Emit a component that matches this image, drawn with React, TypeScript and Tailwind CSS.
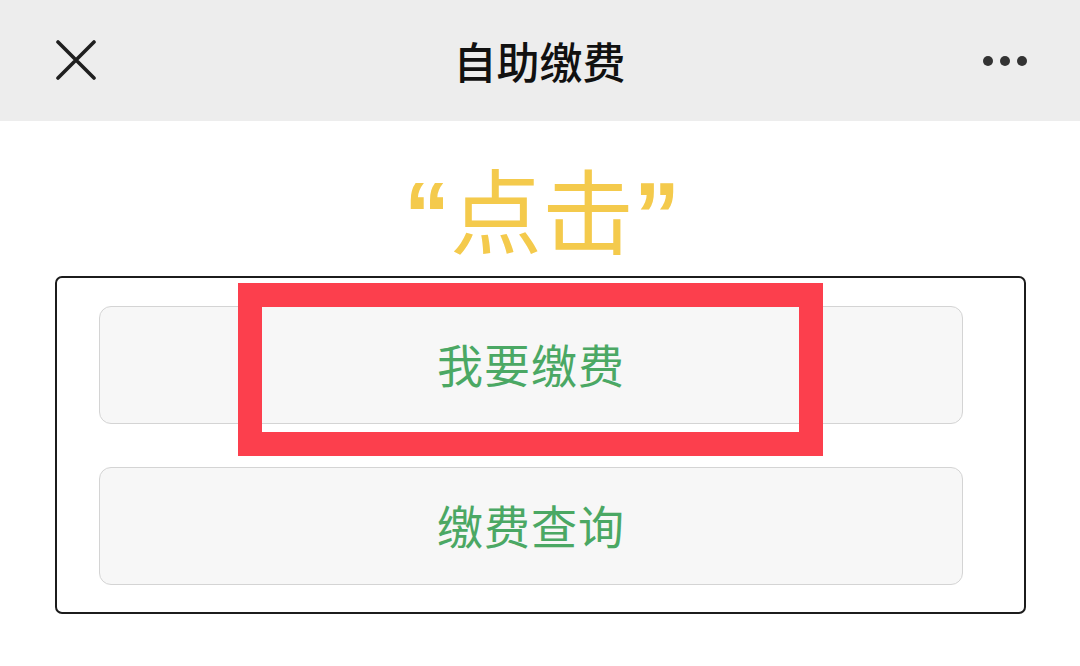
const cjk = "font-['Noto_Sans_CJK_SC',sans-serif]";

const PayButton = ({ label }: { label: string }) => (
  <div className="w-[864px] h-[118px] rounded-[12px] border border-[#d4d4d4] bg-[#f7f7f7] flex items-center justify-center">
    <span className="text-[46px] leading-none text-[#4ba864] tracking-[1px] mt-[-5px]">{label}</span>
  </div>
);

const App = () => {
  return (
    <div className={`w-[1080px] h-[666px] bg-white overflow-hidden ${cjk}`}>
      {/* Nav bar */}
      <div className="h-[121px] bg-[#ededed] flex items-center justify-between px-[56px]">
        <svg width="40" height="40" viewBox="0 0 40 40" className="mt-[-2px]">
          <path d="M2 2 L38 38 M38 2 L2 38" stroke="#1f1f1f" strokeWidth="3.6" strokeLinecap="round" />
        </svg>
        <h1 className="text-[43px] font-medium text-[#111] leading-none">自助缴费</h1>
        <div className="flex gap-[7px] mr-[-3px]">
          <span className="w-[10px] h-[10px] rounded-full bg-[#333]" />
          <span className="w-[10px] h-[10px] rounded-full bg-[#333]" />
          <span className="w-[10px] h-[10px] rounded-full bg-[#333]" />
        </div>
      </div>

      {/* Hint */}
      <div className="h-[155px] flex items-center justify-center pt-[24px]">
        <span className="text-[92px] leading-none text-[#f4ca4c] ml-[4px]">
          <span className="font-['Liberation_Sans',sans-serif] font-bold">“</span>点击<span className="font-['Liberation_Sans',sans-serif] font-bold">”</span>
        </span>
      </div>

      {/* Panel */}
      <div className="relative mx-[55px] w-[971px] h-[338px] border-[2.5px] border-[#1c1c1c] rounded-[7px] pl-[42px] pt-[28px] flex flex-col gap-[43px]">
        <PayButton label="我要缴费" />
        <PayButton label="缴费查询" />
        <div className="absolute left-[181px] top-[5px] w-[585px] h-[173px] border-[24px] border-[#fc3f4d]" />
      </div>
    </div>
  );
};

export default App;
